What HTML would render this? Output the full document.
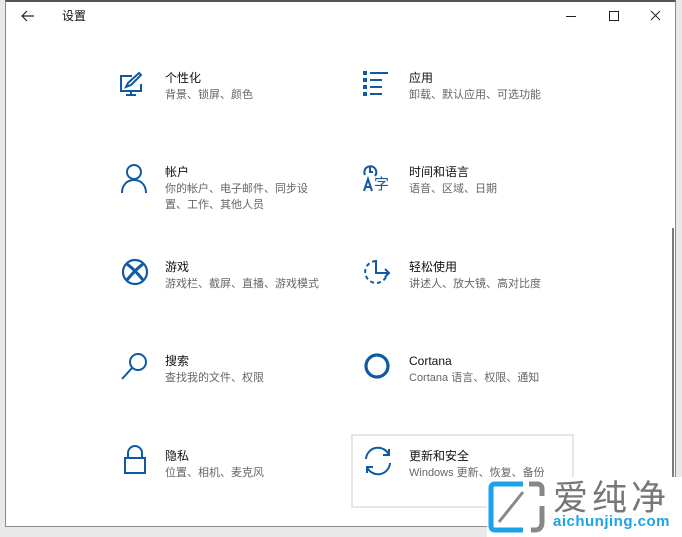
<!DOCTYPE html>
<html><head><meta charset="utf-8"><style>
body{margin:0;width:682px;height:537px;background:#e9e9e9;position:relative;overflow:hidden;font-family:"Liberation Sans","Noto Sans CJK SC",sans-serif;}
.win{position:absolute;left:5px;top:0;width:671px;height:527px;background:#fff;border:1px solid #8a8a8a;border-top:2px solid #555;box-sizing:border-box;}
.t{position:absolute;font-size:12px;color:#111;line-height:14px;white-space:nowrap}
.s{position:absolute;font-size:11px;color:#666;line-height:16px;white-space:nowrap}
svg{position:absolute}
</style></head><body>
<div class="win"></div>
<svg style="left:20px;top:9px" width="16" height="14" viewBox="0 0 16 14"><path d="M7 2L2 7L7 12M2 7H14" stroke="#222" stroke-width="1.2" fill="none"/></svg>
<div class="t" style="left:62px;top:9px">设置</div>
<svg style="left:565px;top:8px" width="100" height="16"><path d="M1 8.5H11" stroke="#222"/><rect x="44.5" y="3.5" width="9" height="9" stroke="#222" fill="none"/><path d="M86 3L95 12M95 3L86 12" stroke="#222"/></svg>
<div style="position:absolute;left:672px;top:228px;width:2px;height:292px;background:#7a7a7a"></div>

<!-- icons -->
<svg style="left:118px;top:70px" width="30" height="30" viewBox="0 0 30 30" fill="none" stroke="#0f5aa3" stroke-width="2"><path d="M14 6H3V21H23V14"/><path d="M8 25H18M13 21V25"/><path d="M8 17L10 13L21 3L23 5L13 15Z"/></svg>
<svg style="left:361px;top:69px" width="30" height="30" viewBox="0 0 30 30" fill="none" stroke="#0f5aa3" stroke-width="2"><rect x="3" y="3" width="2" height="2"/><rect x="3" y="10" width="2" height="2"/><rect x="3" y="17" width="2" height="2"/><rect x="3" y="24" width="2" height="2"/><path d="M9 4H27M9 11H21M9 18H21M9 25H21"/></svg>
<svg style="left:120px;top:163px" width="28" height="32" viewBox="0 0 28 32" fill="none" stroke="#0f5aa3" stroke-width="2"><circle cx="14" cy="9" r="7"/><path d="M2 30C2 22 7 17 14 17S26 22 26 30"/></svg>
<svg style="left:361px;top:163px" width="32" height="32" viewBox="0 0 32 32" fill="none" stroke="#0f5aa3" stroke-width="2"><path d="M4 12A6 6 0 1 1 14 13"/><path d="M9 4V9H12"/><path d="M3 28L7 16L11 28M4.5 24H9.5"/><text x="13" y="26" font-size="15" fill="#0f5aa3" stroke="none" font-family="Noto Sans CJK SC">字</text></svg>
<svg style="left:120px;top:257px" width="30" height="30" viewBox="0 0 30 30" fill="none" stroke="#0f5aa3" stroke-width="2.2"><circle cx="15" cy="15" r="12"/><path d="M7 7Q15 13 23 23M23 7Q15 13 7 23" stroke-width="3"/></svg>
<svg style="left:361px;top:257px" width="32" height="30" viewBox="0 0 32 30" fill="none" stroke="#0f5aa3" stroke-width="2"><path d="M15 4A11 11 0 1 0 26 17" stroke-dasharray="4 3"/><path d="M15 3V16H28M24 12L28 16L24 20"/></svg>
<svg style="left:120px;top:351px" width="30" height="30" viewBox="0 0 30 30" fill="none" stroke="#0f5aa3" stroke-width="2"><circle cx="18" cy="11" r="8"/><path d="M12 17L2 28"/></svg>
<svg style="left:362px;top:351px" width="30" height="30" viewBox="0 0 30 30" fill="none" stroke="#0f5aa3" stroke-width="3.2"><circle cx="15" cy="15" r="11"/></svg>
<svg style="left:122px;top:444px" width="26" height="32" viewBox="0 0 26 32" fill="none" stroke="#0f5aa3" stroke-width="2"><path d="M6 14V9A7 7 0 0 1 20 9V14"/><rect x="3" y="14" width="20" height="15"/></svg>
<div style="position:absolute;left:351px;top:434px;width:223px;height:74px;border:2px solid #e6e6e6;box-sizing:border-box"></div>
<svg style="left:362px;top:445px" width="32" height="32" viewBox="0 0 32 32" fill="none" stroke="#0f5aa3" stroke-width="2"><path d="M4 14A12 12 0 0 1 27 10M27 4V10H21"/><path d="M28 18A12 12 0 0 1 5 22M5 28V22H11"/></svg>

<!-- text -->
<div class="t" style="left:165px;top:71px">个性化</div><div class="s" style="left:165px;top:87px">背景、锁屏、颜色</div>
<div class="t" style="left:409px;top:71px">应用</div><div class="s" style="left:409px;top:87px">卸载、默认应用、可选功能</div>
<div class="t" style="left:165px;top:165px">帐户</div><div class="s" style="left:165px;top:181px">你的帐户、电子邮件、同步设<br>置、工作、其他人员</div>
<div class="t" style="left:409px;top:165px">时间和语言</div><div class="s" style="left:409px;top:181px">语音、区域、日期</div>
<div class="t" style="left:165px;top:260px">游戏</div><div class="s" style="left:165px;top:276px">游戏栏、截屏、直播、游戏模式</div>
<div class="t" style="left:409px;top:260px">轻松使用</div><div class="s" style="left:409px;top:276px">讲述人、放大镜、高对比度</div>
<div class="t" style="left:165px;top:354px">搜索</div><div class="s" style="left:165px;top:370px">查找我的文件、权限</div>
<div class="t" style="left:409px;top:354px">Cortana</div><div class="s" style="left:409px;top:370px">Cortana 语言、权限、通知</div>
<div class="t" style="left:165px;top:449px">隐私</div><div class="s" style="left:165px;top:465px">位置、相机、麦克风</div>
<div class="t" style="left:409px;top:449px">更新和安全</div><div class="s" style="left:409px;top:465px">Windows 更新、恢复、备份</div>

<!-- watermark -->
<div style="position:absolute;left:487px;top:477px;width:195px;height:60px;background:#fff"></div>
<svg style="left:487px;top:480px" width="60" height="56" viewBox="0 0 60 56" fill="none"><path d="M36 4H8Q4 4 4 8V46Q4 50 8 50H36" stroke="#1aa3e8" stroke-width="5"/><path d="M42 4H50Q55 4 55 9V16M55 26V42Q55 50 48 50H44" stroke="#888" stroke-width="5"/><path d="M12 42L36 12" stroke="#888" stroke-width="3"/></svg>
<div style="position:absolute;left:553px;top:476px;font-size:35px;line-height:40px;color:#777;letter-spacing:4px;font-family:'Noto Sans CJK SC',sans-serif">爱纯净</div>
<div style="position:absolute;left:553px;top:514px;font-size:15px;line-height:16px;color:#1aa3e8;font-weight:bold;letter-spacing:0.5px">aichunjing.com</div>
</body></html>
